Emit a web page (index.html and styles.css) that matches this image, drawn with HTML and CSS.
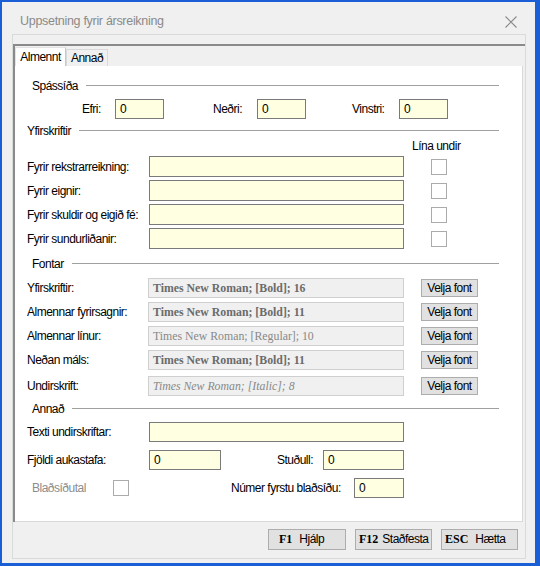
FILE: index.html
```html
<!DOCTYPE html>
<html lang="is">
<head>
    <meta charset="UTF-8">
    <title>Uppsetning fyrir ársreikning</title>
    <link rel="stylesheet" href="styles.css">
</head>
<body>
    <div class="window">
        <div class="titlebar">
            <span class="title">Uppsetning fyrir ársreikning</span>
            <svg class="close" width="12" height="12" viewBox="0 0 12 12">
                <path d="M0.5 0.5 L11.5 11.5 M11.5 0.5 L0.5 11.5" stroke="#8a8a8a" stroke-width="1.1" fill="none"/>
            </svg>
        </div>

        <div class="frame">
            <div class="tabctl">
                <div class="tabs">
                    <div class="tab active">Almennt</div>
                    <div class="tab">Annað</div>
                </div>

                <div class="pane">
                    <!-- Spássíða -->
                    <div class="group">Spássíða</div>
                    <div class="row margins">
                        <span class="lbl l-efri">Efri:</span>
                        <div class="inp w-small">0</div>
                        <span class="lbl l-nedri">Neðri:</span>
                        <div class="inp w-small">0</div>
                        <span class="lbl l-vinstri">Vinstri:</span>
                        <div class="inp w-small">0</div>
                    </div>

                    <!-- Yfirskriftir -->
                    <div class="group g-titles">Yfirskriftir</div>
                    <div class="line-head">Lína undir</div>
                    <div class="rows titles">
                        <div class="row">
                            <span class="lbl">Fyrir rekstrarreikning:</span>
                            <div class="inp w-wide"></div>
                            <div class="chk"></div>
                        </div>
                        <div class="row">
                            <span class="lbl">Fyrir eignir:</span>
                            <div class="inp w-wide"></div>
                            <div class="chk"></div>
                        </div>
                        <div class="row">
                            <span class="lbl">Fyrir skuldir og eigið fé:</span>
                            <div class="inp w-wide"></div>
                            <div class="chk"></div>
                        </div>
                        <div class="row">
                            <span class="lbl">Fyrir sundurliðanir:</span>
                            <div class="inp w-wide"></div>
                            <div class="chk"></div>
                        </div>
                    </div>

                    <!-- Fontar -->
                    <div class="group g-fonts">Fontar</div>
                    <div class="rows fonts">
                        <div class="row">
                            <span class="lbl">Yfirskriftir:</span>
                            <div class="fbox bold">Times New Roman; [Bold]; 16</div>
                            <div class="vbtn">Velja font</div>
                        </div>
                        <div class="row">
                            <span class="lbl">Almennar fyrirsagnir:</span>
                            <div class="fbox bold">Times New Roman; [Bold]; 11</div>
                            <div class="vbtn">Velja font</div>
                        </div>
                        <div class="row">
                            <span class="lbl">Almennar línur:</span>
                            <div class="fbox regular">Times New Roman; [Regular]; 10</div>
                            <div class="vbtn">Velja font</div>
                        </div>
                        <div class="row">
                            <span class="lbl">Neðan máls:</span>
                            <div class="fbox bold">Times New Roman; [Bold]; 11</div>
                            <div class="vbtn">Velja font</div>
                        </div>
                        <div class="row last">
                            <span class="lbl">Undirskrift:</span>
                            <div class="fbox italic">Times New Roman; [Italic]; 8</div>
                            <div class="vbtn">Velja font</div>
                        </div>
                    </div>

                    <!-- Annað -->
                    <div class="group g-other">Annað</div>
                    <div class="rows other">
                        <div class="row">
                            <span class="lbl">Texti undirskriftar:</span>
                            <div class="inp w-wide"></div>
                        </div>
                        <div class="row">
                            <span class="lbl">Fjöldi aukastafa:</span>
                            <div class="inp w-dec">0</div>
                            <span class="lbl l-studull">Stuðull:</span>
                            <div class="inp w-factor">0</div>
                        </div>
                        <div class="row pages">
                            <span class="lbl l-pages">Blaðsíðutal</span>
                            <div class="chk"></div>
                            <span class="lbl l-first">Númer fyrstu blaðsíðu:</span>
                            <div class="inp w-first">0</div>
                        </div>
                    </div>
                </div>
            </div>

            <div class="buttons">
                <div class="btn btn-help"><b class="key">F1</b>Hjálp</div>
                <div class="btn"><b class="key">F12</b>Staðfesta</div>
                <div class="btn btn-esc"><b class="key">ESC</b>Hætta</div>
            </div>
        </div>
    </div>
</body>
</html>
```

FILE: styles.css
```css
*{margin: 0; padding: 0; box-sizing: border-box;}

body{
    width: 540px;
    height: 566px;
    overflow: hidden;
    font-family: "Liberation Sans", Arial, sans-serif;
    font-size: 12px;
    letter-spacing: -0.5px;
    color: #000;
}

.window{
    width: 540px;
    height: 566px;
    background-color: #f0f0f0;
    border: 2px solid #1a5fd6;
    border-right-width: 5px;
    border-bottom-width: 3px;
    display: flex;
    flex-direction: column;
}

/* title bar */
.titlebar{
    height: 32px;
    flex-shrink: 0;
    display: flex;
    align-items: center;
    justify-content: space-between;
    padding: 0 18px 0 18px;
}

.title{
    font-size: 12.5px;
    letter-spacing: -0.3px;
    color: #8a8a8a;
    margin-top: 5px;
}

.close{ margin-top: 7px; }

/* outer frame */
.frame{
    flex: 1;
    margin: 0 9px 4px 10px;
    border: 1px solid #dadada;
    padding-top: 9px;
    display: flex;
    flex-direction: column;
}

.tabctl{
    border-top: 2px solid #8a8a8a;
    border-left: 2px solid #8a8a8a;
    padding: 1px 2px 0 0;
}

.tabs{
    height: 19px;
    display: flex;
    align-items: flex-end;
}

.tab{
    height: 17px;
    border: 1px solid #d9d9d9;
    border-bottom: none;
    background-color: #f0f0f0;
    line-height: 17px;
    width: 42px;
    text-align: center;
}

.tab.active{
    height: 19px;
    width: 51px;
    background-color: #fff;
    border-color: #e3e3e3;
    border-right-color: #c8c8c8;
    line-height: 18px;
}

.pane{
    height: 456px;
    padding-top: 13px;
    background-color: #fff;
    border-right: 1px solid #d9d9d9;
    border-bottom: 1px solid #d9d9d9;
}

/* section headings with rule */
.group{
    height: 14px;
    line-height: 14px;
    padding-left: 17px;
    padding-right: 23px;
    display: flex;
    align-items: center;
}

.group::after{
    content: "";
    flex: 1;
    border-top: 1px solid #a0a0a0;
    margin-left: 8px;
    margin-top: -1px;
}

.g-titles{ margin-top: 5px; padding-left: 12px; }
.g-fonts{ margin-top: 8px; }
.g-other{ margin-top: 6px; }

.row{
    display: flex;
    align-items: center;
    padding-left: 12px;
    height: 21px;
}

.rows{
    display: flex;
    flex-direction: column;
    gap: 3px;
}

.lbl{
    width: 122px;
    flex-shrink: 0;
    white-space: nowrap;
}

/* Spássíða row */
.margins{
    margin-top: 6px;
    height: 20px;
    padding-left: 67px;
}
.l-efri{ width: 33px; }
.l-nedri{ width: 44px; margin-left: 49px; }
.l-vinstri{ width: 47px; margin-left: 46px; }

.inp{
    height: 21px;
    border: 1px solid #7a7a7a;
    background-color: #ffffe1;
    padding-left: 4px;
    line-height: 19px;
    flex-shrink: 0;
}

.margins .inp, .other .inp{ height: 20px; line-height: 18px; }

.w-small{ width: 49px; }
.w-wide{ width: 255px; }
.w-dec{ width: 72px; }
.w-factor{ width: 81px; }
.w-first{ width: 50px; }

.line-head{
    height: 14px;
    line-height: 14px;
    margin-top: 1px;
    padding-left: 397px;
}

.titles{ margin-top: 3px; }

.chk{
    width: 16px;
    height: 16px;
    border: 1px solid #ababab;
    background-color: #fff;
    margin-left: 27px;
    flex-shrink: 0;
}

/* Fontar */
.fonts{ margin-top: 7px; gap: 4px; }
.fonts .row{ height: 20px; }
.fonts .row.last{ margin-top: 2px; }

.fbox{
    width: 256px;
    height: 20px;
    border: 1px solid #cfcfcf;
    background-color: #f0f0f0;
    color: #6b6b6b;
    font-family: "Liberation Serif", "Times New Roman", serif;
    font-size: 11.8px;
    letter-spacing: 0;
    line-height: 18px;
    padding-left: 4px;
    margin-left: -1px;
    white-space: nowrap;
    overflow: hidden;
}

.fbox.bold{ font-weight: bold; }
.fbox.regular{ color: #888; }
.fbox.italic{ font-style: italic; color: #888; }

.vbtn{
    width: 57px;
    height: 18px;
    margin-left: 17px;
    border: 1px solid #adadad;
    background-color: #e1e1e1;
    text-align: center;
    line-height: 16px;
}

/* Annað */
.other{ margin-top: 6px; gap: 8px; }
.other .row{ height: 20px; }

.l-studull{ width: 46px; margin-left: 56px; }

.pages{ padding-left: 17px; }
.l-pages{ width: 81px; color: #8c8c8c; }
.pages .chk{ margin-left: 0; }
.l-first{ width: 123px; margin-left: 102px; }

/* bottom buttons */
.buttons{
    display: flex;
    justify-content: flex-end;
    gap: 9px;
    margin-top: 7px;
    padding-right: 7px;
}

.btn{
    width: 77px;
    height: 21px;
    border: 1px solid #adadad;
    background-color: #e1e1e1;
    line-height: 19px;
    padding-left: 3px;
    white-space: nowrap;
}

.btn-help{ width: 78px; padding-left: 10px; }

.key{
    font-family: "Liberation Serif", serif;
    font-size: 12px;
    letter-spacing: 0;
    margin-right: 4px;
}

.btn-help .key{ margin-right: 7px; }
.btn-esc .key{ margin-right: 7px; }
```
